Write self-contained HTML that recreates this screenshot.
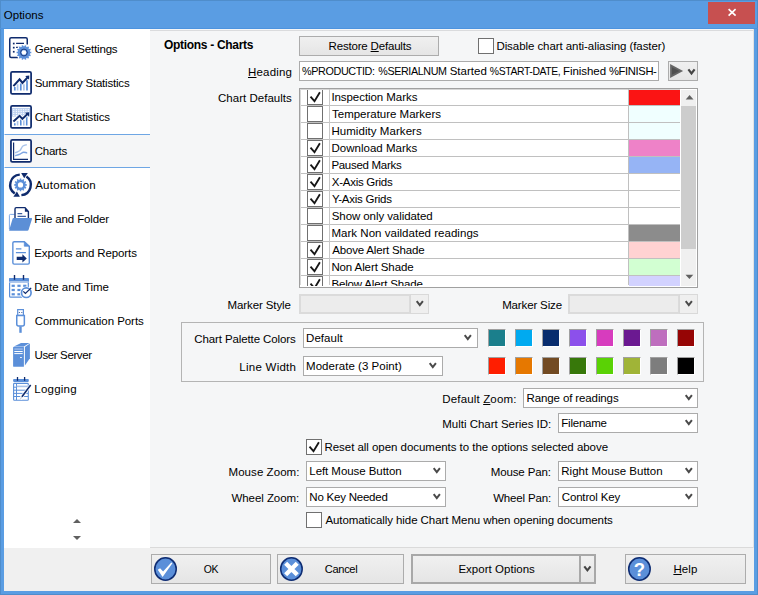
<!DOCTYPE html>
<html><head><meta charset="utf-8"><title>Options</title>
<style>
html,body{margin:0;padding:0}
html{background:#5a9de3}
body{width:758px;height:595px;overflow:hidden;background:#5a9de3;position:relative;font-family:'Liberation Sans',sans-serif;font-size:12px;color:#000}
.a{position:absolute;display:block}
.t{position:absolute;white-space:pre;line-height:16px;height:16px;font-size:11.5px}
.t u{text-decoration:underline;text-underline-offset:1px;text-decoration-thickness:1px}
#frame{position:absolute;left:0;top:0;width:756px;height:593px;border:1px solid #4f8dcb}
#close{position:absolute;left:708px;top:2px;width:47px;height:22px;background:#c75050}
#client{position:absolute;left:4px;top:29px;width:750px;height:562px;background:#f5f6f7;overflow:hidden}
#topline{position:absolute;left:150px;top:30px;width:604px;height:1px;background:#dadbdd}
#tl2{position:absolute;left:0;top:28px;width:758px;height:1px;background:#4c93df}
#side{position:absolute;left:4px;top:29px;width:146px;height:519px;background:#fff}
#sel{position:absolute;left:4px;top:134px;width:145px;height:32px;border:1px solid #6ea6e4;border-right:0;border-left:1px solid #fff;background:#f5f6f7}
#foot{position:absolute;left:4px;top:548px;width:750px;height:43px;background:#f0f0f0}
#footline{position:absolute;left:150px;top:547px;width:604px;height:1px;background:#dadada}
.btn{position:absolute;box-sizing:border-box;border:1px solid #acacac;background:linear-gradient(#f0f0f0,#e5e5e5)}
.btn2{position:absolute;box-sizing:border-box;border:2px solid #a8a8a8;background:linear-gradient(#f0f0f0,#e5e5e5)}
.combo{position:absolute;border:1px solid #ababab;background:#fff}
.combo.dis{border-color:#d9d9d9;background:#ebebeb}
.cb{position:absolute;border:1px solid #707070;background:#fff}
.sw{position:absolute;width:18px;height:18px;box-sizing:border-box;border:1px solid #fff;border-top-color:#a0a0a0;border-left-color:#a0a0a0}
#rline{position:absolute;left:753px;top:29px;width:1px;height:519px;background:#e2e2e2}
#grp{position:absolute;left:181px;top:322px;width:521px;height:58px;border:1px solid #b4b4b4}
#list{position:absolute;left:299px;top:88px;width:397px;height:198px;border:1px solid #a0a0a0;background:#fff;overflow:hidden}
#li{position:absolute;left:0;top:0;width:380px;height:197px;overflow:hidden}
.lr{position:absolute;left:0;width:380px;height:16px;border-bottom:1px solid #c0c0c0}
.lc{position:absolute;left:329px;top:0;width:51px;height:16px}
.cb2{position:absolute;width:14px;height:14px;border:1px solid #707070;background:#fff}
#v1{position:absolute;left:29px;top:0;width:1px;height:196px;background:#c8c8c8}
#v2{position:absolute;left:328px;top:0;width:1px;height:196px;background:#c0c0c0}
#v0{position:absolute;left:0;top:0;width:1px;height:196px;background:#d8d8d8}
#sb{position:absolute;left:381px;top:1px;width:15px;height:196px;background:#f0f0f0}
#thumb{position:absolute;left:0;top:16px;width:15px;height:143px;background:#cdcdcd}
</style></head><body>
<div id="frame"></div>
<div id="close"><svg class="a" style="left:19px;top:6px" width="10" height="10" viewBox="0 0 10 10"><path d="M1.6 1.2 L8.6 7.6 M8.6 1.2 L1.6 7.6" stroke="#fff" stroke-width="1.7" fill="none"/></svg></div>
<div id="tl2"></div>
<div id="client"></div>
<div id="topline"></div>
<div id="side"></div>
<div id="foot"></div>
<div id="footline"></div>
<div id="rline"></div>
<div id="sel"></div>
<svg class="a" style="left:4px;top:32px" width="40" height="30" viewBox="0 0 40 30">
<path d="M23.25 12.6 V7.2 Q23.25 5.75 21.8 5.75 H7.2 Q5.75 5.75 5.75 7.2 V24 Q5.75 25.45 7.2 25.45 H14.3" fill="none" stroke="#0f2b6d" stroke-width="1.5"/>
<rect x="8.9" y="10.7" width="1.7" height="1.7" fill="#0f2b6d"/>
<rect x="8.9" y="14.8" width="1.7" height="1.7" fill="#0f2b6d"/>
<rect x="8.9" y="18.9" width="1.7" height="1.7" fill="#0f2b6d"/>
<path d="M12.1 11.4 H20 M12.1 15.4 H14.6" stroke="#0f2b6d" stroke-width="1.3" fill="none"/>
<circle cx="19.95" cy="20.5" r="8.0" fill="#fff"/>
<path d="M26.09 19.67 L27.31 19.77 L27.31 21.23 L26.09 21.33 L25.85 22.42 L26.90 23.04 L26.27 24.35 L25.12 23.92 L24.43 24.78 L25.11 25.80 L23.97 26.71 L23.13 25.82 L22.13 26.30 L22.30 27.52 L20.88 27.84 L20.51 26.68 L19.39 26.68 L19.02 27.84 L17.60 27.52 L17.77 26.30 L16.77 25.82 L15.93 26.71 L14.79 25.80 L15.47 24.78 L14.78 23.92 L13.63 24.35 L13.00 23.04 L14.05 22.42 L13.81 21.33 L12.59 21.23 L12.59 19.77 L13.81 19.67 L14.05 18.58 L13.00 17.96 L13.63 16.65 L14.78 17.08 L15.47 16.22 L14.79 15.20 L15.93 14.29 L16.77 15.18 L17.77 14.70 L17.60 13.48 L19.02 13.16 L19.39 14.32 L20.51 14.32 L20.88 13.16 L22.30 13.48 L22.13 14.70 L23.13 15.18 L23.97 14.29 L25.11 15.20 L24.43 16.22 L25.12 17.08 L26.27 16.65 L26.90 17.96 L25.85 18.58 Z" fill="#5b8fd9"/>
<circle cx="19.95" cy="20.5" r="3.4" fill="#5b8fd9" stroke="#0f2b6d" stroke-width="0.8"/>
<circle cx="19.95" cy="20.5" r="2.3" fill="#fff"/>
</svg>
<svg class="a" style="left:4px;top:66px" width="40" height="30" viewBox="0 0 40 30"><rect x="6.95" y="5.85" width="20.15" height="22.05" rx="1.4" fill="#fff" stroke="#0f2b6d" stroke-width="1.75"/>
<path d="M10.8 24.5 V21.1 M16.8 24.5 V17.5 M23 24.5 V14.2" stroke="#5b8fd9" stroke-width="1.7" fill="none"/>
<path d="M13.6 24.5 V18.2 M19.9 24.5 V18.2" stroke="#a9c3ea" stroke-width="1.7" fill="none"/>
<path d="M9.4 20.1 L15.6 13.4 L18.5 16.9 L23.6 11.4" fill="none" stroke="#0f2b6d" stroke-width="2.1"/>
<path d="M25.3 9.6 L25.1 13.8 L21.2 10 Z" fill="#0f2b6d"/>
</svg>
<svg class="a" style="left:4px;top:100px" width="40" height="30" viewBox="0 0 40 30"><rect x="6.95" y="5.85" width="20.15" height="22.05" rx="1.4" fill="#fff" stroke="#0f2b6d" stroke-width="1.75"/>
<rect x="8" y="8" width="18" height="8.6" fill="#bcd0f0"/>
<rect x="9.10" y="9.25" width="1.3" height="1.0" fill="#fff"/><rect x="11.75" y="9.25" width="1.3" height="1.0" fill="#fff"/><rect x="14.15" y="9.25" width="1.3" height="1.0" fill="#fff"/><rect x="16.50" y="9.25" width="1.3" height="1.0" fill="#fff"/><rect x="18.85" y="9.25" width="1.3" height="1.0" fill="#fff"/><rect x="21.25" y="9.25" width="1.3" height="1.0" fill="#fff"/><rect x="23.65" y="9.25" width="1.3" height="1.0" fill="#fff"/><rect x="9.10" y="11.15" width="1.3" height="1.0" fill="#fff"/><rect x="11.75" y="11.15" width="1.3" height="1.0" fill="#fff"/><rect x="14.15" y="11.15" width="1.3" height="1.0" fill="#fff"/><rect x="16.50" y="11.15" width="1.3" height="1.0" fill="#fff"/><rect x="18.85" y="11.15" width="1.3" height="1.0" fill="#fff"/><rect x="21.25" y="11.15" width="1.3" height="1.0" fill="#fff"/><rect x="23.65" y="11.15" width="1.3" height="1.0" fill="#fff"/><rect x="9.10" y="13.10" width="1.3" height="1.0" fill="#fff"/><rect x="11.75" y="13.10" width="1.3" height="1.0" fill="#fff"/><rect x="14.15" y="13.10" width="1.3" height="1.0" fill="#fff"/><rect x="16.50" y="13.10" width="1.3" height="1.0" fill="#fff"/><rect x="18.85" y="13.10" width="1.3" height="1.0" fill="#fff"/><rect x="21.25" y="13.10" width="1.3" height="1.0" fill="#fff"/><rect x="23.65" y="13.10" width="1.3" height="1.0" fill="#fff"/><rect x="9.10" y="15.00" width="1.3" height="1.0" fill="#fff"/><rect x="11.75" y="15.00" width="1.3" height="1.0" fill="#fff"/><rect x="14.15" y="15.00" width="1.3" height="1.0" fill="#fff"/><rect x="16.50" y="15.00" width="1.3" height="1.0" fill="#fff"/><rect x="18.85" y="15.00" width="1.3" height="1.0" fill="#fff"/><rect x="21.25" y="15.00" width="1.3" height="1.0" fill="#fff"/><rect x="23.65" y="15.00" width="1.3" height="1.0" fill="#fff"/>
<path d="M10.8 25.6 V23.3 M16.8 25.6 V19.6 M22.7 25.6 V17" stroke="#5b8fd9" stroke-width="1.6" fill="none"/>
<path d="M13.6 25.6 V21.1 M19.8 25.6 V20.2" stroke="#a9c3ea" stroke-width="1.6" fill="none"/>
<path d="M9.4 21.5 L15.6 15.8 L18.4 18.9 L23.5 14" fill="none" stroke="#fff" stroke-width="3.4"/>
<path d="M9.4 21.5 L15.6 15.8 L18.4 18.9 L23.5 14" fill="none" stroke="#0f2b6d" stroke-width="2"/>
<path d="M25.2 12.3 L25 16.5 L21 12.7 Z" fill="#0f2b6d"/>
</svg>
<svg class="a" style="left:4px;top:134px" width="40" height="30" viewBox="0 0 40 30"><rect x="6.95" y="5.85" width="20.15" height="22.05" rx="1.4" fill="#fff" stroke="#0f2b6d" stroke-width="1.75"/>
<path d="M9.6 8.4 V25.3 H24" fill="none" stroke="#0f2b6d" stroke-width="1.2"/>
<path d="M11.1 18.9 C13.5 17.9 14.8 17.6 15.9 16.6 C17.2 15.3 17.6 13 18.9 12 C20 11.3 21.4 11.2 22.8 10.6" fill="none" stroke="#a9c3ea" stroke-width="1.4"/>
<path d="M11.2 21.7 C13 21 14.6 20.9 16 20.2 C17.4 19.5 18.3 18.3 19.6 18.2 C20.9 18.1 22 18.8 23.2 18.9" fill="none" stroke="#7ea5e2" stroke-width="1.5"/>
</svg>
<svg class="a" style="left:4px;top:168px" width="40" height="30" viewBox="0 0 40 30">
<path d="M17.40 27.16 A10.3 10.3 0 0 0 22.41 8.46" fill="none" stroke="#0f2b6d" stroke-width="2.4"/>
<path d="M15.78 6.63 A10.3 10.3 0 0 0 10.74 25.44" fill="none" stroke="#0f2b6d" stroke-width="2.4"/>
<path d="M17.2 5.1 L23.8 5.1 L20.2 10.2 Z" fill="#0f2b6d"/>
<path d="M15.9 28.8 L9.4 28.8 L12.9 23.6 Z" fill="#0f2b6d"/>
<path d="M21.64 16.09 L22.86 16.16 L22.86 17.64 L21.64 17.71 L21.35 18.76 L22.37 19.44 L21.64 20.72 L20.54 20.17 L19.77 20.94 L20.32 22.04 L19.04 22.77 L18.36 21.75 L17.31 22.04 L17.24 23.26 L15.76 23.26 L15.69 22.04 L14.64 21.75 L13.96 22.77 L12.68 22.04 L13.23 20.94 L12.46 20.17 L11.36 20.72 L10.63 19.44 L11.65 18.76 L11.36 17.71 L10.14 17.64 L10.14 16.16 L11.36 16.09 L11.65 15.04 L10.63 14.36 L11.36 13.08 L12.46 13.63 L13.23 12.86 L12.68 11.76 L13.96 11.03 L14.64 12.05 L15.69 11.76 L15.76 10.54 L17.24 10.54 L17.31 11.76 L18.36 12.05 L19.04 11.03 L20.32 11.76 L19.77 12.86 L20.54 13.63 L21.64 13.08 L22.37 14.36 L21.35 15.04 Z M13.90 16.90 a2.6 2.6 0 1 0 5.2 0 a2.6 2.6 0 1 0 -5.2 0 Z" fill="#5b8fd9" fill-rule="evenodd"/>
</svg>
<svg class="a" style="left:4px;top:202px" width="40" height="30" viewBox="0 0 40 30">
<path d="M10.6 12.4 H6.3 Q5.4 12.4 5.4 13.3 V27" fill="none" stroke="#7ea8e6" stroke-width="1"/>
<path d="M11 16.5 V7 Q11 5.65 12.3 5.65 H21 L24.4 9.6 V16.5" fill="#fff" stroke="#0f2b6d" stroke-width="1.4"/>
<path d="M20.9 5.4 L24.7 9.8 H20.9 Z" fill="#0f2b6d"/>
<path d="M13.5 11.6 H18.2 M13.5 14.3 H21.9" stroke="#3f5f9f" stroke-width="1.2" fill="none"/>
<path d="M9.6 16 H27.4 Q28.3 16 28 16.9 L24.5 28 Q24.2 28.8 23.3 28.8 H5.8 Q4.9 28.8 5.2 27.9 L8.6 16.8 Q8.9 16 9.6 16 Z" fill="#5c8fd6"/>
</svg>
<svg class="a" style="left:4px;top:236px" width="40" height="30" viewBox="0 0 40 30">
<path d="M20.4 5.7 H10.2 Q8.85 5.7 8.85 7 V26.8 Q8.85 28.1 10.2 28.1 H24 Q25.3 28.1 25.3 26.8 V10.2 Z" fill="#fff" stroke="#5b8fd9" stroke-width="1.4" stroke-linejoin="round"/>
<path d="M20.3 5.7 V10.2 H25.3 Z" fill="#5b8fd9" stroke="#5b8fd9" stroke-width="0.8" stroke-linejoin="round"/>
<path d="M11.9 12.9 H17.4 M11.9 16.6 H21.9" stroke="#5b8fd9" stroke-width="1.2" fill="none"/>
<path d="M12.7 20.8 H18.4 V18.2 L22.8 22.4 L18.4 26.6 V24 H12.7 Z" fill="#0f2b6d"/>
</svg>
<svg class="a" style="left:4px;top:270px" width="40" height="30" viewBox="0 0 40 30">
<rect x="5.6" y="8.5" width="18.7" height="18.7" rx="1" fill="#fff" stroke="#5b8fd9" stroke-width="1.2"/>
<rect x="5" y="7.9" width="19.9" height="3.5" rx="0.8" fill="#5b8fd9"/>
<rect x="5" y="11.4" width="19.9" height="1.5" fill="#a9c3ea"/>
<rect x="7.6" y="14.700000000000001" width="3.2" height="2.2" fill="#5b8fd9"/><rect x="7.6" y="18.9" width="3.2" height="2.2" fill="#5b8fd9"/><rect x="7.6" y="23.2" width="3.2" height="2.2" fill="#5b8fd9"/><rect x="13.4" y="14.700000000000001" width="3.2" height="2.2" fill="#5b8fd9"/><rect x="13.4" y="18.9" width="3.2" height="2.2" fill="#5b8fd9"/><rect x="13.4" y="23.2" width="3.2" height="2.2" fill="#5b8fd9"/><rect x="19.2" y="14.700000000000001" width="3.2" height="2.2" fill="#5b8fd9"/><rect x="19.2" y="18.9" width="3.2" height="2.2" fill="#5b8fd9"/><rect x="19.2" y="23.2" width="3.2" height="2.2" fill="#5b8fd9"/>
<path d="M10.5 5 V9.8 M19.5 5 V9.8" stroke="#0f2b6d" stroke-width="1.4" fill="none"/>
<circle cx="22.3" cy="22.7" r="6.3" fill="#fff"/>
<circle cx="22.3" cy="22.7" r="4.8" fill="#fff" stroke="#5b8fd9" stroke-width="1.7"/>
<path d="M19.3 21.4 L21.4 23.4 L27.2 17.9" fill="none" stroke="#0f2b6d" stroke-width="1.3"/>
</svg>
<svg class="a" style="left:4px;top:304px" width="40" height="30" viewBox="0 0 40 30">
<rect x="13.7" y="5.6" width="5.7" height="5.8" fill="#fff" stroke="#5b8fd9" stroke-width="1.2"/>
<rect x="14.8" y="8" width="1.2" height="0.9" fill="#44609c"/>
<rect x="17.2" y="8" width="1.2" height="0.9" fill="#44609c"/>
<path d="M12.75 11.6 H20.35 V20.3 Q20.35 22 18.5 22 H14.6 Q12.75 22 12.75 20.3 Z" fill="#fff" stroke="#5b8fd9" stroke-width="1.5"/>
<rect x="15.3" y="22.4" width="2.4" height="6.4" fill="#5b8fd9"/>
</svg>
<svg class="a" style="left:4px;top:338px" width="40" height="30" viewBox="0 0 40 30">
<path d="M9.9 8.6 L17 5 H25.6 L19.9 8.6 Z" fill="#5b8fd9"/>
<path d="M20.9 9 L25.9 5.6 V20.2 L20.9 27.6 Z" fill="#5b8fd9"/>
<path d="M9.1 9.6 Q9.1 8.7 10 8.7 H19.9 V28.8 H10 Q9.1 28.8 9.1 27.9 Z" fill="#5b8fd9"/>
<rect x="10.3" y="10.2" width="8.4" height="1.8" fill="#8eb1e6"/>
<rect x="10.3" y="13" width="8.4" height="1" fill="#fff"/>
<rect x="10.3" y="15.1" width="8.4" height="1" fill="#fff"/>
<rect x="16" y="19" width="1.9" height="1" fill="#e8effa"/>
</svg>
<svg class="a" style="left:4px;top:372px" width="40" height="30" viewBox="0 0 40 30">
<rect x="9.6" y="11.4" width="14.7" height="16.8" rx="0.8" fill="#fff" stroke="#5b8fd9" stroke-width="1.1"/>
<rect x="9.1" y="7.1" width="15.7" height="2.8" rx="0.8" fill="#5b8fd9"/>
<path d="M12.5 11.4 V28" stroke="#5b8fd9" stroke-width="1" fill="none"/>
<path d="M12.5 14.4 H24" stroke="#a9c3ea" stroke-width="1.6" fill="none"/>
<path d="M9.6 15.2 H12.5 M9.6 18.2 H24 M9.6 21.4 H24 M9.6 24.5 H24" stroke="#5b8fd9" stroke-width="1" fill="none"/>
<path d="M13.5 5 V8.7 M20.6 5 V8.7" stroke="#0f2b6d" stroke-width="1.3" fill="none"/>
<path d="M26.8 12.9 L16.3 27" stroke="#fff" stroke-width="3" fill="none"/>
<path d="M17.9 24.8 L16.3 27" stroke="#c9d1de" stroke-width="1.2" fill="none"/>
<path d="M26.7 13.1 L17.9 24.8" stroke="#0f2b6d" stroke-width="1.6" fill="none"/>
</svg>
<svg class="a" style="left:73.3px;top:518.5px" width="8" height="4" viewBox="0 0 8 4"><path d="M0 4 L4.0 0 L8 4 Z" fill="#606060"/></svg>
<svg class="a" style="left:73.3px;top:535.5px" width="8" height="4" viewBox="0 0 8 4"><path d="M0 0 L4.0 4 L8 0 Z" fill="#606060"/></svg>
<div class="btn" style="left:299px;top:36px;width:140px;height:20px"></div>
<div class="combo" style="left:299px;top:61px;width:358px;height:18px"></div>
<div class="btn" style="left:668px;top:61px;width:30px;height:20px"></div>
<svg class="a" style="left:669px;top:62px" width="28" height="18" viewBox="0 0 28 18"><path d="M1.1 2 L14.1 9 L1.1 16 Z" fill="#666"/><path d="M3 5.2 L10.6 9 L3 12.8 Z" fill="#505050"/><path d="M19.4 7.4 L22.5 11.4 L25.6 7.4" fill="none" stroke="#444" stroke-width="2.2"/></svg>
<div id="list"><div id="li">
<div class="lr" style="top:0px"><div class="lc" style="background:#fb1414"></div></div>
<div class="cb2" style="left:7px;top:0px"><svg width="14" height="14" viewBox="0 0 14 14"><path d="M2.5 6.6 L6.5 11.2 L11.9 2.3" fill="none" stroke="#161616" stroke-width="1.85"/></svg></div>
<div class="lr" style="top:17px"><div class="lc" style="background:#f0ffff"></div></div>
<div class="cb2" style="left:7px;top:17px"></div>
<div class="lr" style="top:34px"><div class="lc" style="background:#f0ffff"></div></div>
<div class="cb2" style="left:7px;top:34px"></div>
<div class="lr" style="top:51px"><div class="lc" style="background:#ee82c8"></div></div>
<div class="cb2" style="left:7px;top:51px"><svg width="14" height="14" viewBox="0 0 14 14"><path d="M2.5 6.6 L6.5 11.2 L11.9 2.3" fill="none" stroke="#161616" stroke-width="1.85"/></svg></div>
<div class="lr" style="top:68px"><div class="lc" style="background:#96b4f5"></div></div>
<div class="cb2" style="left:7px;top:68px"><svg width="14" height="14" viewBox="0 0 14 14"><path d="M2.5 6.6 L6.5 11.2 L11.9 2.3" fill="none" stroke="#161616" stroke-width="1.85"/></svg></div>
<div class="lr" style="top:85px"><div class="lc" style="background:#ffffff"></div></div>
<div class="cb2" style="left:7px;top:85px"><svg width="14" height="14" viewBox="0 0 14 14"><path d="M2.5 6.6 L6.5 11.2 L11.9 2.3" fill="none" stroke="#161616" stroke-width="1.85"/></svg></div>
<div class="lr" style="top:102px"><div class="lc" style="background:#ffffff"></div></div>
<div class="cb2" style="left:7px;top:102px"><svg width="14" height="14" viewBox="0 0 14 14"><path d="M2.5 6.6 L6.5 11.2 L11.9 2.3" fill="none" stroke="#161616" stroke-width="1.85"/></svg></div>
<div class="lr" style="top:119px"><div class="lc" style="background:#ffffff"></div></div>
<div class="cb2" style="left:7px;top:119px"></div>
<div class="lr" style="top:136px"><div class="lc" style="background:#8c8c8c"></div></div>
<div class="cb2" style="left:7px;top:136px"></div>
<div class="lr" style="top:153px"><div class="lc" style="background:#ffd2d2"></div></div>
<div class="cb2" style="left:7px;top:153px"><svg width="14" height="14" viewBox="0 0 14 14"><path d="M2.5 6.6 L6.5 11.2 L11.9 2.3" fill="none" stroke="#161616" stroke-width="1.85"/></svg></div>
<div class="lr" style="top:170px"><div class="lc" style="background:#d2ffd2"></div></div>
<div class="cb2" style="left:7px;top:170px"><svg width="14" height="14" viewBox="0 0 14 14"><path d="M2.5 6.6 L6.5 11.2 L11.9 2.3" fill="none" stroke="#161616" stroke-width="1.85"/></svg></div>
<div class="lr" style="top:187px"><div class="lc" style="background:#d2d2ff"></div></div>
<div class="cb2" style="left:7px;top:187px"><svg width="14" height="14" viewBox="0 0 14 14"><path d="M2.5 6.6 L6.5 11.2 L11.9 2.3" fill="none" stroke="#161616" stroke-width="1.85"/></svg></div>
<div class="a" style="left:0;top:0;width:380px;height:1px;background:#d6d6d6"></div><div id="v0"></div><div id="v1"></div><div id="v2"></div>
<span class="t" style="top:0px;letter-spacing:-0.061px;left:31.38px;">Inspection Marks</span>
<span class="t" style="top:17px;letter-spacing:-0.016px;left:32.06px;">Temperature Markers</span>
<span class="t" style="top:34px;letter-spacing:0.058px;left:31.40px;">Humidity Markers</span>
<span class="t" style="top:51px;letter-spacing:0.026px;left:31.40px;">Download Marks</span>
<span class="t" style="top:68px;letter-spacing:-0.294px;left:31.40px;">Paused Marks</span>
<span class="t" style="top:85px;letter-spacing:-0.283px;left:31.87px;">X-Axis Grids</span>
<span class="t" style="top:102px;letter-spacing:-0.261px;left:31.91px;">Y-Axis Grids</span>
<span class="t" style="top:119px;letter-spacing:-0.079px;left:31.74px;">Show only validated</span>
<span class="t" style="top:136px;letter-spacing:0.030px;left:31.40px;">Mark Non vaildated readings</span>
<span class="t" style="top:153px;letter-spacing:-0.184px;left:32.28px;">Above Alert Shade</span>
<span class="t" style="top:170px;letter-spacing:-0.109px;left:31.40px;">Non Alert Shade</span>
<span class="t" style="top:187px;letter-spacing:-0.155px;left:31.40px;">Below Alert Shade</span>
</div><div id="sb"><div id="thumb"></div>
<svg class="a" style="left:4px;top:5px" width="10" height="5" viewBox="0 0 10 5"><path d="M0.7 4.4 L4.6 0 L8.5 4.4 Z" fill="#606060"/></svg>
<svg class="a" style="left:4px;top:184px" width="10" height="6" viewBox="0 0 10 6"><path d="M0.5 0.7 L4.4 5 L8.3 0.7 Z" fill="#606060"/></svg>
</div></div>
<div id="grp"></div>
<div class="a" style="left:299px;top:294px;width:108px;height:16px;border:2px solid #dbdbdb;background:#ececec"></div><div class="a" style="left:410px;top:294px;width:17px;height:18px;border:1px solid #d9d9d9;background:#efefef"></div>
<svg class="a" style="left:414.5px;top:300.4px" width="10" height="8" viewBox="0 0 10 8"><path d="M1.7 1.2 L4.8 5.2 L7.9 1.2" fill="none" stroke="#4a4a4a" stroke-width="1.95" stroke-linecap="butt"/></svg>
<div class="a" style="left:568px;top:294px;width:108px;height:16px;border:2px solid #dbdbdb;background:#ececec"></div><div class="a" style="left:679px;top:294px;width:17px;height:18px;border:1px solid #d9d9d9;background:#efefef"></div>
<svg class="a" style="left:683.5px;top:300.4px" width="10" height="8" viewBox="0 0 10 8"><path d="M1.7 1.2 L4.8 5.2 L7.9 1.2" fill="none" stroke="#4a4a4a" stroke-width="1.95" stroke-linecap="butt"/></svg>
<div class="combo" style="left:303px;top:328px;width:173px;height:18px"></div>
<svg class="a" style="left:463.3px;top:334.4px" width="10" height="8" viewBox="0 0 10 8"><path d="M1.7 1.2 L4.8 5.2 L7.9 1.2" fill="none" stroke="#4a4a4a" stroke-width="1.95" stroke-linecap="butt"/></svg>
<div class="combo" style="left:303px;top:356px;width:138px;height:18px"></div>
<svg class="a" style="left:428.3px;top:362.4px" width="10" height="8" viewBox="0 0 10 8"><path d="M1.7 1.2 L4.8 5.2 L7.9 1.2" fill="none" stroke="#4a4a4a" stroke-width="1.95" stroke-linecap="butt"/></svg>
<div class="combo" style="left:523px;top:388px;width:173px;height:18px"></div>
<svg class="a" style="left:683.5px;top:394.4px" width="10" height="8" viewBox="0 0 10 8"><path d="M1.7 1.2 L4.8 5.2 L7.9 1.2" fill="none" stroke="#4a4a4a" stroke-width="1.95" stroke-linecap="butt"/></svg>
<div class="combo" style="left:558px;top:413px;width:138px;height:18px"></div>
<svg class="a" style="left:683.5px;top:419.4px" width="10" height="8" viewBox="0 0 10 8"><path d="M1.7 1.2 L4.8 5.2 L7.9 1.2" fill="none" stroke="#4a4a4a" stroke-width="1.95" stroke-linecap="butt"/></svg>
<div class="combo" style="left:306px;top:461px;width:138px;height:18px"></div>
<svg class="a" style="left:431.6px;top:467.4px" width="10" height="8" viewBox="0 0 10 8"><path d="M1.7 1.2 L4.8 5.2 L7.9 1.2" fill="none" stroke="#4a4a4a" stroke-width="1.95" stroke-linecap="butt"/></svg>
<div class="combo" style="left:306px;top:487px;width:138px;height:18px"></div>
<svg class="a" style="left:431.6px;top:493.4px" width="10" height="8" viewBox="0 0 10 8"><path d="M1.7 1.2 L4.8 5.2 L7.9 1.2" fill="none" stroke="#4a4a4a" stroke-width="1.95" stroke-linecap="butt"/></svg>
<div class="combo" style="left:558px;top:461px;width:138px;height:18px"></div>
<svg class="a" style="left:683.5px;top:467.4px" width="10" height="8" viewBox="0 0 10 8"><path d="M1.7 1.2 L4.8 5.2 L7.9 1.2" fill="none" stroke="#4a4a4a" stroke-width="1.95" stroke-linecap="butt"/></svg>
<div class="combo" style="left:558px;top:487px;width:138px;height:18px"></div>
<svg class="a" style="left:683.5px;top:493.4px" width="10" height="8" viewBox="0 0 10 8"><path d="M1.7 1.2 L4.8 5.2 L7.9 1.2" fill="none" stroke="#4a4a4a" stroke-width="1.95" stroke-linecap="butt"/></svg>
<div class="cb" style="left:478px;top:38px;width:14px;height:14px"></div>
<div class="cb" style="left:306px;top:439px;width:14px;height:14px"><svg width="14" height="14" viewBox="0 0 14 14"><path d="M2.5 6.6 L6.5 11.2 L11.9 2.3" fill="none" stroke="#161616" stroke-width="1.85"/></svg></div>
<div class="cb" style="left:306px;top:512px;width:14px;height:14px"></div>
<div class="sw" style="left:488px;top:329px;background:#1b7f8c"></div>
<div class="sw" style="left:515px;top:329px;background:#00aaf0"></div>
<div class="sw" style="left:542px;top:329px;background:#082d6e"></div>
<div class="sw" style="left:569px;top:329px;background:#8c50eb"></div>
<div class="sw" style="left:596px;top:329px;background:#d73cbe"></div>
<div class="sw" style="left:623px;top:329px;background:#6b1991"></div>
<div class="sw" style="left:650px;top:329px;background:#be6ebe"></div>
<div class="sw" style="left:677px;top:329px;background:#960505"></div>
<div class="sw" style="left:488px;top:357px;background:#ff1e00"></div>
<div class="sw" style="left:515px;top:357px;background:#e67800"></div>
<div class="sw" style="left:542px;top:357px;background:#734b23"></div>
<div class="sw" style="left:569px;top:357px;background:#37780a"></div>
<div class="sw" style="left:596px;top:357px;background:#5ad205"></div>
<div class="sw" style="left:623px;top:357px;background:#a0b437"></div>
<div class="sw" style="left:650px;top:357px;background:#7d7d7d"></div>
<div class="sw" style="left:677px;top:357px;background:#000000"></div>
<div class="btn" style="left:151px;top:554px;width:120px;height:30px"></div>
<div class="btn" style="left:277px;top:554px;width:127px;height:30px"></div>
<div class="btn2" style="left:411px;top:554px;width:185px;height:30px"></div>
<div class="a" style="left:579px;top:556px;width:2px;height:26px;background:#a8a8a8"></div>
<svg class="a" style="left:582px;top:565px" width="11" height="8" viewBox="0 0 11 8"><path d="M2.3 1.3 L5.4 5.3 L8.5 1.3" fill="none" stroke="#444" stroke-width="2.1"/></svg>
<div class="btn" style="left:625px;top:554px;width:121px;height:30px"></div>
<svg class="a" style="left:152px;top:556px" width="27" height="27" viewBox="-13.50 -13.00 27 27"><ellipse cx="0" cy="0" rx="10.75" ry="11.15" fill="#5b8fd9" stroke="#0f2d73" stroke-width="1.5"/><path d="M-7.7 0.8 L-5.4 -0.8 L-2.4 2.5 L5.8 -6.4 L6.9 -5.7 L-2.9 8.1 Z" fill="#fff"/></svg>
<svg class="a" style="left:278px;top:556px" width="27" height="27" viewBox="-13.45 -13.00 27 27"><ellipse cx="0" cy="0" rx="10.75" ry="11.15" fill="#5b8fd9" stroke="#0f2d73" stroke-width="1.5"/><path d="M-5.8 -5.8 L5.8 5.8 M5.8 -5.8 L-5.8 5.8" stroke="#fff" stroke-width="4.3" fill="none"/></svg>
<svg class="a" style="left:626px;top:556px" width="27" height="27" viewBox="-13.45 -13.00 27 27"><ellipse cx="0" cy="0" rx="10.75" ry="11.15" fill="#5b8fd9" stroke="#0f2d73" stroke-width="1.5"/><text x="0" y="6.9" text-anchor="middle" font-family="'Liberation Sans', sans-serif" font-weight="700" font-size="18.5" fill="#fff">?</text></svg>
<span class="t" style="top:7px;letter-spacing:0.005px;left:3.81px;">Options</span>
<span class="t" style="top:41px;letter-spacing:-0.189px;left:34.78px;">General Settings</span>
<span class="t" style="top:75px;letter-spacing:-0.198px;left:34.64px;">Summary Statistics</span>
<span class="t" style="top:109px;letter-spacing:-0.140px;left:34.78px;">Chart Statistics</span>
<span class="t" style="top:143px;letter-spacing:-0.288px;left:34.78px;">Charts</span>
<span class="t" style="top:177px;letter-spacing:0.267px;left:35.18px;">Automation</span>
<span class="t" style="top:211px;letter-spacing:-0.141px;left:34.30px;">File and Folder</span>
<span class="t" style="top:245px;letter-spacing:-0.125px;left:34.30px;">Exports and Reports</span>
<span class="t" style="top:279px;letter-spacing:-0.006px;left:34.30px;">Date and Time</span>
<span class="t" style="top:313px;letter-spacing:-0.051px;left:34.78px;">Communication Ports</span>
<span class="t" style="top:347px;letter-spacing:-0.378px;left:34.52px;">User Server</span>
<span class="t" style="top:381px;letter-spacing:0.228px;left:34.30px;">Logging</span>
<span class="t" style="top:37px;letter-spacing:-0.305px;left:164.00px;font-weight:700;font-size:12px;">Options - Charts</span>
<span class="t" style="top:38px;letter-spacing:-0.184px;left:328.60px;">Restore <u>D</u>efaults</span>
<span class="t" style="top:38px;letter-spacing:-0.066px;left:496.40px;">Disable chart anti-aliasing (faster)</span>
<span class="t" style="top:64px;letter-spacing:0.195px;left:248.00px;"><u>H</u>eading</span>
<span class="t" style="top:63px;letter-spacing:-0.370px;left:301.94px;font-size:10.81px;">%PRODUCTID:</span>
<span class="t" style="top:63px;letter-spacing:-0.383px;left:378.34px;font-size:10.73px;">%SERIALNUM</span>
<span class="t" style="top:63px;letter-spacing:0.027px;left:449.64px;">Started</span>
<span class="t" style="top:64px;letter-spacing:-0.372px;left:489.83px;font-size:10.38px;">%START-DATE,</span>
<span class="t" style="top:63px;letter-spacing:-0.070px;left:563.10px;">Finished</span>
<span class="t" style="top:63px;letter-spacing:-0.346px;left:608.93px;font-size:11.2px;">%FINISH-</span>
<span class="t" style="top:90px;letter-spacing:0.022px;left:217.98px;">Chart Defaults</span>
<span class="t" style="top:297px;letter-spacing:-0.102px;left:227.50px;">Marker Style</span>
<span class="t" style="top:297px;letter-spacing:-0.150px;left:502.20px;">Marker Size</span>
<span class="t" style="top:331px;letter-spacing:-0.100px;left:194.18px;">Chart Palette Colors</span>
<span class="t" style="top:359px;letter-spacing:0.259px;left:239.30px;">Line Width</span>
<span class="t" style="top:330px;letter-spacing:0.027px;left:306.10px;">Default</span>
<span class="t" style="top:358px;letter-spacing:0.024px;left:306.10px;">Moderate (3 Point)</span>
<span class="t" style="top:391px;letter-spacing:0.154px;left:442.30px;">Default <u>Z</u>oom:</span>
<span class="t" style="top:416px;letter-spacing:-0.017px;left:442.30px;">Multi Chart Series ID:</span>
<span class="t" style="top:390px;letter-spacing:-0.115px;left:526.50px;">Range of readings</span>
<span class="t" style="top:415px;letter-spacing:-0.229px;left:561.30px;">Filename</span>
<span class="t" style="top:439px;letter-spacing:-0.042px;left:324.50px;">Reset all open documents to the options selected above</span>
<span class="t" style="top:464px;letter-spacing:0.064px;left:228.50px;">Mouse Zoom:</span>
<span class="t" style="top:490px;letter-spacing:-0.060px;left:231.48px;">Wheel Zoom:</span>
<span class="t" style="top:463px;letter-spacing:-0.061px;left:309.30px;">Left Mouse Button</span>
<span class="t" style="top:489px;letter-spacing:-0.225px;left:309.30px;">No Key Needed</span>
<span class="t" style="top:464px;letter-spacing:-0.113px;left:490.70px;">Mouse Pan:</span>
<span class="t" style="top:490px;letter-spacing:-0.167px;left:493.18px;">Wheel Pan:</span>
<span class="t" style="top:463px;letter-spacing:0.019px;left:561.30px;">Right Mouse Button</span>
<span class="t" style="top:489px;letter-spacing:-0.170px;left:561.78px;">Control Key</span>
<span class="t" style="top:512px;letter-spacing:-0.067px;left:325.38px;">Automatically hide Chart Menu when opening documents</span>
<span class="t" style="top:562px;letter-spacing:-0.363px;left:203.80px;font-size:10.49px;">OK</span>
<span class="t" style="top:561px;letter-spacing:-0.347px;left:324.78px;font-size:11.13px;">Cancel</span>
<span class="t" style="top:561px;letter-spacing:0.028px;left:458.40px;">Export Options</span>
<span class="t" style="top:561px;letter-spacing:0.093px;left:673.40px;"><u>H</u>elp</span>
</body></html>
